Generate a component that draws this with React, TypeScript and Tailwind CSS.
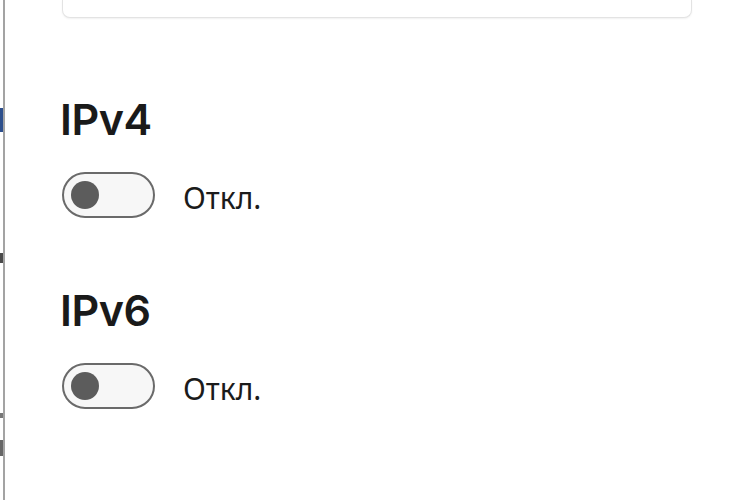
import { useState } from 'react';

function Toggle({ on, onChange }: { on: boolean; onChange: (v: boolean) => void }) {
  return (
    <button
      onClick={() => onChange(!on)}
      className={`relative w-[93px] h-[46px] rounded-full border-2 flex items-center px-[7px] shrink-0 ${
        on ? 'bg-[#005fb8] border-[#005fb8] justify-end' : 'bg-[#f7f7f7] border-[#6a6a6a] justify-start'
      }`}
    >
      <span className={`w-[28px] h-[28px] rounded-full ${on ? 'bg-white' : 'bg-[#5c5c5c]'}`} />
    </button>
  );
}

function Section({ title }: { title: string }) {
  const [on, setOn] = useState(false);
  return (
    <div className="flex flex-col">
      <h2
        className="text-[43px] leading-[52px] font-semibold text-[#1a1a1a] -ml-[2px] tracking-[-0.5px]"
        style={{ fontFamily: 'Inter, "Noto Sans", sans-serif' }}
      >
        {title}
      </h2>
      <div className="flex items-center gap-[28px] mt-[27px]">
        <Toggle on={on} onChange={setOn} />
        <span className="text-[30px] leading-[40px] text-[#1b1b1b] mt-[5px]">{on ? 'Вкл.' : 'Откл.'}</span>
      </div>
    </div>
  );
}

export default function App() {
  return (
    <div className="w-[750px] h-[500px] bg-white flex overflow-hidden" style={{ fontFamily: '"Noto Sans", "Open Sans", sans-serif' }}>
      {/* cut-off sidebar on the left */}
      <div className="w-[3px] flex flex-col shrink-0">
        <div className="h-[108px]" />
        <div className="h-[24px] bg-[#2d4f8c]" />
        <div className="h-[121px]" />
        <div className="h-[10px] bg-[#4a4a4a]" />
        <div className="h-[150px]" />
        <div className="h-[5px] bg-[#777]" />
        <div className="h-[22px]" />
        <div className="h-[16px] bg-[#666]" />
      </div>
      <div className="w-[2px] bg-[#a3a3a3] shrink-0" />

      <div className="flex-1 pl-[57px] flex flex-col">
        <div className="w-[630px] h-[18px] bg-white rounded-b-[8px] border-x border-b border-[#e3e3e3] shadow-[0_1px_2px_rgba(0,0,0,0.06)]" />

        <div className="flex flex-col gap-[66px] mt-[75px]">
          <Section title="IPv4" />
          <Section title="IPv6" />
        </div>
      </div>
    </div>
  );
}
